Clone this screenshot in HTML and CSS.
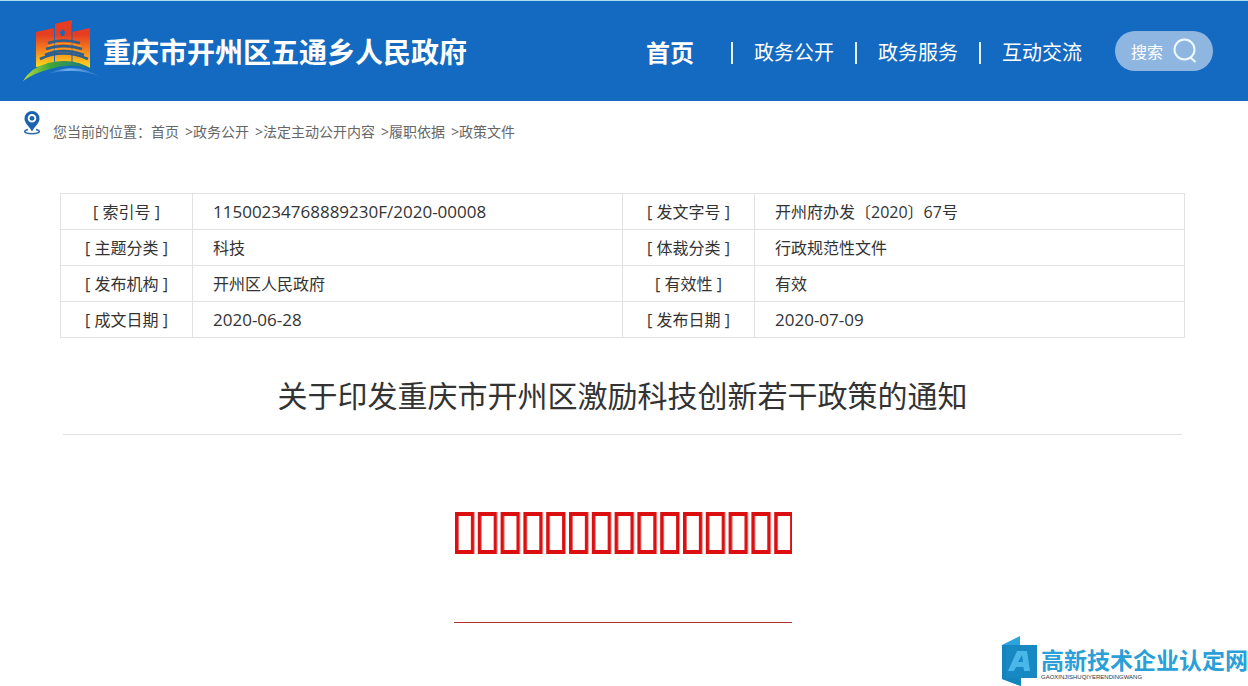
FILE: index.html
```html
<!DOCTYPE html>
<html lang="zh-CN">
<head>
<meta charset="utf-8">
<meta name="viewport" content="width=device-width, initial-scale=1">
<title>关于印发重庆市开州区激励科技创新若干政策的通知</title>
<link rel="stylesheet" href="styles.css">
</head>
<body>
<header class="header">
  <a class="brand" href="#">
    <svg class="brand-logo" viewBox="0 0 80 62" aria-hidden="true">
      <defs>
        <linearGradient id="tower" x1="0" y1="0" x2="0" y2="1">
          <stop offset="0.3" stop-color="#e53c22"/>
          <stop offset="0.65" stop-color="#f6861f"/>
          <stop offset="1" stop-color="#ffe01c"/>
        </linearGradient>
        <linearGradient id="hill" x1="0" y1="0" x2="1" y2="0">
          <stop offset="0" stop-color="#b6dc3c"/>
          <stop offset="0.4" stop-color="#3da53c"/>
          <stop offset="1" stop-color="#1b6f8c"/>
        </linearGradient>
        <linearGradient id="river" x1="0" y1="0" x2="1" y2="0">
          <stop offset="0" stop-color="#1469c0"/>
          <stop offset="0.4" stop-color="#76b3ec"/>
          <stop offset="1" stop-color="#1469c0"/>
        </linearGradient>
      </defs>
      <path fill="url(#tower)" d="M13 12 31 8V4L49 0V12L67 8V48Q52 41 13 47Z"/>
      <path fill="none" stroke="#1469c0" stroke-width="1" d="M31.500 4V44M49 4V44"/>
      <path fill="#1469c0" d="M40 9l2 3-1 4h-3l-1-4z"/>
      <g fill="none" stroke="#2b5f8e" stroke-width="2.600">
        <path d="M25 23Q40 18 57 23"/>
        <path d="M23 29Q40 23 59 29"/>
        <path d="M22 35Q40 27 61 35"/>
        <path d="M17 39Q40 28 65 39"/>
      </g>
      <path fill="none" stroke="#f2a521" stroke-width="1" d="M25 26Q40 20.500 58 26M22 32Q40 25 60 32"/>
      <path fill="url(#hill)" d="M0 61Q7 48 25 43Q52 37 70 50Q48 42 27 49Q11 53 0 61Z"/>
      <path fill="url(#river)" d="M24 54Q54 41 79 58Q54 46 24 54Z"/>
    </svg>
    <span class="brand-name">重庆市开州区五通乡人民政府</span>
  </a>
  <nav class="nav">
    <a class="nav-home" href="#">首页</a>
    <a class="nav-link" href="#">政务公开</a>
    <a class="nav-link" href="#">政务服务</a>
    <a class="nav-link" href="#">互动交流</a>
  </nav>
  <button class="search" type="button">
    <span>搜索</span>
    <svg class="search-icon" viewBox="0 0 24 26" aria-hidden="true">
      <circle cx="11.500" cy="11.500" r="10"/>
      <path d="M17 19l5.500 5"/>
    </svg>
  </button>
</header>

<div class="crumbs">
  <svg class="pin" viewBox="0 0 18 25" aria-hidden="true">
    <path class="pin-base" d="M5 19.500C0 20.500 0 23.700 9 23.700S18 20.500 13 19.500"/>
    <path class="pin-body" fill-rule="evenodd" d="M9 1a7.500 7.500 0 0 0-7.500 7.700C1.500 13 6 16 9 21.500 12 16 16.500 13 16.500 8.700A7.500 7.500 0 0 0 9 1Zm0 3a4.300 4.300 0 1 1 0 8.600A4.300 4.300 0 0 1 9 4Z"/>
    <circle class="pin-body" cx="9" cy="8.300" r="2.400"/>
  </svg>
  <nav class="crumb-trail">
    <span>您当前的位置：</span>
    <a href="#">首页</a>
    <a class="crumb-next" href="#">政务公开</a>
    <a class="crumb-next" href="#">法定主动公开内容</a>
    <a class="crumb-next" href="#">履职依据</a>
    <a class="crumb-next" href="#">政策文件</a>
  </nav>
</div>

<main class="article">
  <table class="meta">
    <tbody>
      <tr><th scope="row">[ 索引号 ]</th><td class="meta-number">11500234768889230F/2020-00008</td><th scope="row">[ 发文字号 ]</th><td>开州府办发〔2020〕67号</td></tr>
      <tr><th scope="row">[ 主题分类 ]</th><td>科技</td><th scope="row">[ 体裁分类 ]</th><td>行政规范性文件</td></tr>
      <tr><th scope="row">[ 发布机构 ]</th><td>开州区人民政府</td><th scope="row">[ 有效性 ]</th><td>有效</td></tr>
      <tr><th scope="row">[ 成文日期 ]</th><td class="meta-number">2020-06-28</td><th scope="row">[ 发布日期 ]</th><td class="meta-number">2020-07-09</td></tr>
    </tbody>
  </table>
  <h1 class="title">关于印发重庆市开州区激励科技创新若干政策的通知</h1>
  <div class="letterhead">
    <svg class="letterhead-mark" viewBox="0 0 338 42" aria-hidden="true">
      <defs>
        <pattern id="box" width="22.800" height="42" patternUnits="userSpaceOnUse">
          <path fill="#dc0f10" fill-rule="evenodd" d="M1 0H20.300V42H1ZM4.600 4V38H16.900V4Z"/>
        </pattern>
      </defs>
      <rect width="338" height="42" fill="url(#box)"/>
    </svg>
  </div>
</main>

<aside class="watermark">
  <svg class="watermark-logo" viewBox="0 0 36 50" aria-hidden="true">
    <path fill="#2aa5dc" d="M0 9 18 0V9H35V42H19V50L0 43Z"/>
    <path fill="#1583bd" d="M0 9H18L19 50 0 43Z"/>
    <path fill="#1788c2" d="M4 9H35V42H4Z"/>
    <path fill="#49b8e8" fill-rule="evenodd" d="M6 35 15 15H25L28 35H22L21.500 31H14L12 35ZM16 26H21L20 19Z"/>
  </svg>
  <div class="watermark-text">
    <span class="watermark-name">高新技术企业认定网</span>
    <span class="watermark-latin">GAOXINJISHUQIYERENDINGWANG</span>
  </div>
</aside>
</body>
</html>
```
FILE: styles.css
```css
* {
  box-sizing: border-box;
}

body {
  margin: 0;
  min-height: 100vh;
  position: relative;
  background: #fff;
  color: #333;
  font-family: "Open Sans", "Noto Sans CJK SC", sans-serif;
  font-size: 16px;
}

a {
  color: inherit;
  text-decoration: none;
}

.header {
  display: flex;
  align-items: center;
  height: 101px;
  padding: 0 35px 0 23px;
  border-top: 1px solid #a9dcf3;
  background: #1469c0;
  color: #fff;
}

.brand {
  display: flex;
  align-items: center;
  margin-right: auto;
}

.brand-logo {
  width: 80px;
  height: 62px;
}

.brand-name {
  padding-top: 2px;
  font-size: 28px;
  font-weight: 700;
  line-height: 40px;
  white-space: nowrap;
}

.nav {
  display: flex;
  align-items: center;
  padding-top: 4px;
  white-space: nowrap;
}

.nav-home {
  margin-right: 16px;
  font-size: 24px;
  font-weight: 700;
  line-height: 36px;
}

.nav-link {
  display: flex;
  align-items: center;
  font-size: 20px;
  line-height: 30px;
}

.nav-link::before {
  content: "";
  width: 2px;
  height: 22px;
  margin: 0 21px;
  background: #e6f3fd;
}

.search {
  display: flex;
  align-items: center;
  justify-content: center;
  gap: 10px;
  width: 98px;
  height: 40px;
  margin-left: 33px;
  padding: 0;
  border: 0;
  border-radius: 20px;
  background: #8fb6e1;
  color: #fff;
  font: inherit;
}

.search-icon {
  width: 24px;
  height: 26px;
  fill: none;
  stroke: #eefaff;
  stroke-width: 2;
}

.crumbs {
  display: flex;
  align-items: flex-start;
  gap: 12px;
  padding: 9px 23px 0;
}

.pin {
  width: 18px;
  height: 25px;
}

.pin-body {
  fill: #1b63b0;
}

.pin-base {
  fill: none;
  stroke: #2d68a8;
  stroke-width: 1.5;
}

.crumb-trail {
  display: flex;
  flex-wrap: wrap;
  padding-top: 12px;
  color: #666;
  font-size: 14px;
  line-height: 20px;
}

.crumb-next {
  display: flex;
}

.crumb-next::before {
  content: ">";
  width: 14px;
  text-align: right;
}

.article {
  padding: 51px 63px 0 60px;
}

.meta {
  width: 100%;
  border-collapse: collapse;
  table-layout: fixed;
}

.meta th,
.meta td {
  height: 36px;
  padding: 0;
  border: 1px solid #e2e2e2;
  font-weight: 400;
  line-height: 24px;
}

.meta th {
  width: 132px;
  text-align: center;
}

.meta td {
  padding-left: 20px;
}

.meta .meta-number {
  font-size: 17px;
}

.title {
  margin: 34px 3px 0;
  padding-bottom: 14px;
  border-bottom: 1px solid #e2e2e2;
  font-size: 30px;
  font-weight: 400;
  line-height: 48px;
  text-align: center;
}

.letterhead {
  width: 338px;
  max-width: 100%;
  margin: 77px auto 0;
  padding-bottom: 68px;
  border-bottom: 1px solid #b2302f;
}

.letterhead-mark {
  display: block;
  width: 100%;
}

.watermark {
  display: flex;
  position: absolute;
  right: 0;
  bottom: 0;
  gap: 3px;
}

.watermark-logo {
  width: 36px;
  height: 50px;
}

.watermark-text {
  display: flex;
  flex-direction: column;
  padding-top: 10px;
}

.watermark-name {
  color: #2a9fd8;
  font-size: 23px;
  font-weight: 700;
  line-height: 28px;
}

.watermark-latin {
  color: #333;
  font-family: "Liberation Sans", sans-serif;
  font-size: 6px;
  line-height: 6px;
}
```
